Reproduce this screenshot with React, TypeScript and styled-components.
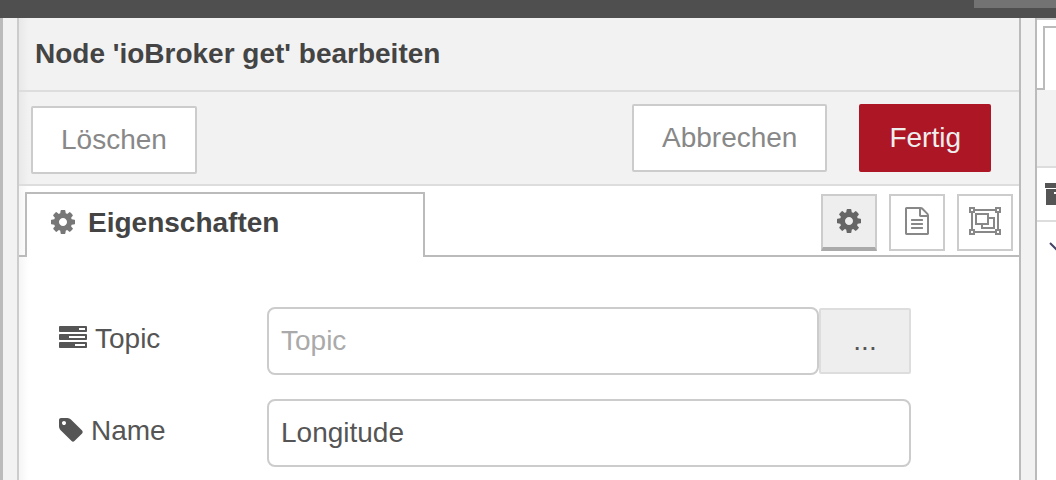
import React from "react";
import styled, { createGlobalStyle } from "styled-components";

const GlobalStyle = createGlobalStyle`
  *, *::before, *::after { box-sizing: border-box; }
  body {
    margin: 0;
    background: #fff;
    color: #555;
    font-family: "Liberation Sans", Arial, Helvetica, sans-serif;
    font-size: 28px;
    overflow: hidden;
  }
  button, input { font: inherit; margin: 0; }
`;

const Page = styled.div`
  display: flex;
  flex-direction: column;
  min-height: 100vh;
`;

const TopBar = styled.header`
  display: flex;
  justify-content: flex-end;
  height: 18px;
  background: #4f4f4f;
`;

const DeployButton = styled.div`
  width: 82px;
  height: 8px;
  background: #737373;
`;

const Workspace = styled.div`
  display: flex;
  flex: 1;
`;

const CanvasEdge = styled.div`
  flex: none;
  width: 3px;
  background: #bbb;
`;

const Gutter = styled.div<{ $width: number }>`
  flex: none;
  width: ${(p) => p.$width}px;
  background: #f2f2f2;
`;

const Tray = styled.main`
  flex: 1;
  min-width: 0;
  border-left: 2px solid #ccc;
  border-right: 2px solid #bbb;
  background: linear-gradient(to right, rgba(0, 0, 0, 0.04), rgba(0, 0, 0, 0) 10px);
`;

const TrayTitle = styled.h1`
  margin: 0;
  padding: 0 16px;
  border-bottom: 2px solid #ddd;
  background: rgba(0, 0, 0, 0.05);
  color: #444;
  font-size: 28px;
  font-weight: bold;
  line-height: 72px;
`;

const ActionBar = styled.div`
  display: flex;
  align-items: flex-start;
  gap: 32px;
  padding: 12px 28px 10px 12px;
  border-bottom: 2px solid #ddd;
  background: rgba(0, 0, 0, 0.05);
`;

const StartActions = styled.div`
  flex: 1;
  padding-top: 2px;
`;

const ActionButton = styled.button<{ $primary?: boolean }>`
  display: block;
  height: 68px;
  padding: 0 28px;
  border: 2px solid ${(p) => (p.$primary ? "#ad1625" : "#ccc")};
  border-radius: 2px;
  background: ${(p) => (p.$primary ? "#ad1625" : "#fff")};
  color: ${(p) => (p.$primary ? "#eee" : "#888")};
`;

const TabBar = styled.div`
  display: flex;
  align-items: flex-start;
  justify-content: space-between;
  height: 71px;
  padding: 6px 6px 0;
  border-bottom: 2px solid #bbb;
`;

const Tab = styled.button`
  display: flex;
  align-items: center;
  gap: 13px;
  width: 400px;
  height: 65px;
  padding: 0 24px 6px;
  border: 2px solid #bbb;
  border-bottom: 0;
  border-radius: 1px;
  background: #fff;
  color: #444;
  font-weight: bold;
  svg { color: #777; }
`;

const TabTools = styled.div`
  display: flex;
  gap: 12px;
  padding-top: 2px;
`;

const ToolButton = styled.button<{ $active?: boolean }>`
  display: flex;
  align-items: center;
  justify-content: center;
  width: 56px;
  height: 57px;
  padding: 0 0 ${(p) => (p.$active ? 0 : 2)}px;
  border: 2px solid #ccc;
  border-bottom: ${(p) => (p.$active ? "4px solid #aaa" : "2px solid #ccc")};
  background: ${(p) => (p.$active ? "#eee" : "#fff")};
  color: ${(p) => (p.$active ? "#666" : "#888")};
`;

const Form = styled.form`
  display: flex;
  flex-direction: column;
  gap: 24px;
  padding: 50px 40px 0;
`;

const FormRow = styled.div`
  display: flex;
  align-items: flex-start;
`;

const Label = styled.label`
  display: flex;
  align-items: center;
  gap: 8px;
  width: 208px;
  height: 64px;
`;

const Field = styled.div`
  display: flex;
  align-items: center;
  width: 70%;
`;

const TextInput = styled.input`
  flex: 1;
  min-width: 0;
  height: 68px;
  padding: 0 12px;
  border: 2px solid #ccc;
  border-radius: 8px;
  background: #fff;
  color: #555;
  outline: none;
  &::placeholder { color: #aaa; opacity: 1; }
`;

const BrowseButton = styled.button`
  flex: none;
  width: 92px;
  height: 66px;
  padding: 0;
  border: 2px solid #ddd;
  border-radius: 2px;
  background: #eee;
  color: #555;
`;

const Sidebar = styled.aside`
  flex: none;
  width: 21px;
  border-left: 2px solid #bbb;
  overflow: hidden;
`;

const SidebarTabs = styled.div`
  height: 72px;
  padding: 6px 0 0 6px;
  border-top: 2px solid #ccc;
  border-bottom: 2px solid #bbb;
`;

const SidebarTab = styled.div`
  height: 64px;
  margin-right: -2px;
  margin-bottom: -2px;
  border: 2px solid #bbb;
  border-bottom: 0;
  background: #fff;
`;

const SidebarToolbar = styled.div`
  height: 78px;
  border-bottom: 2px solid #ddd;
  background: #f2f2f2;
`;

const SidebarRow = styled.div<{ $ruled?: boolean }>`
  height: 54px;
  padding: ${(p) => (p.$ruled ? "16px 0 0 8px" : "22px 0 0 12px")};
  border-bottom: ${(p) => (p.$ruled ? "2px solid #ddd" : "0")};
`;

/* The icon glyphs sit slightly above the middle of the text line. */
const Icon = styled.svg`
  display: block;
  flex: none;
  margin-top: -2px;
  fill: currentColor;
`;

const CogIcon = () => (
  <Icon width="24" height="28" viewBox="128 0 1536 1792" aria-hidden="true">
    <path d="M1152 896q0-106-75-181t-181-75-181 75-75 181 75 181 181 75 181-75 75-181zm512-109v222q0 12-8 23t-20 13l-185 28q-19 54-39 91 35 50 107 138 10 12 10 25t-9 23q-27 37-99 108t-94 71q-12 0-26-9l-138-108q-44 23-91 38-16 136-29 186-7 28-36 28h-222q-14 0-24.500-8.500t-11.500-21.500l-28-184q-49-16-90-37l-141 107q-10 9-25 9-14 0-25-11-126-114-165-168-7-10-7-23 0-12 8-23 15-21 51-66.500t54-70.500q-27-50-41-99l-183-27q-13-2-21-12.500t-8-23.500v-222q0-12 8-23t19-13l186-28q14-46 39-92-40-57-107-138-10-12-10-24 0-10 9-23 26-36 98.500-107.500t94.500-71.500q13 0 26 10l138 107q44-23 91-38 16-136 29-186 7-28 36-28h222q14 0 24.500 8.500t11.500 21.500l28 184q49 16 90 37l142-107q9-9 24-9 13 0 25 10 129 119 165 170 7 8 7 22 0 12-8 23-15 21-51 66.500t-54 70.500q26 50 41 98l183 28q13 2 21 12.500t8 23.500z" />
  </Icon>
);

const DocumentIcon = () => (
  <Icon width="24" height="28" viewBox="128 0 1536 1792" aria-hidden="true">
    <path d="M1596 380q28 28 48 76t20 88v1152q0 40-28 68t-68 28h-1344q-40 0-68-28t-28-68v-1600q0-40 28-68t68-28h896q40 0 88 20t76 48zm-444-244v376h376q-10-29-22-41l-313-313q-12-12-41-22zm384 1528v-1024h-416q-40 0-68-28t-28-68v-416h-768v1536h1280zm-1024-864q0-14 9-23t23-9h704q14 0 23 9t9 23v64q0 14-9 23t-23 9h-704q-14 0-23-9t-9-23v-64zm736 224q14 0 23 9t9 23v64q0 14-9 23t-23 9h-704q-14 0-23-9t-9-23v-64q0-14 9-23t23-9h704zm0 256q14 0 23 9t9 23v64q0 14-9 23t-23 9h-704q-14 0-23-9t-9-23v-64q0-14 9-23t23-9h704z" />
  </Icon>
);

const ObjectGroupIcon = () => (
  <Icon width="32" height="28" viewBox="0 0 2048 1792" aria-hidden="true">
    <path
      fillRule="evenodd"
      d="M2048 384h-128v1024h128v384h-384v-128h-1280v128h-384v-384h128v-1024h-128v-384h384v128h1280v-128h384zM1792 128v128h128v-128zM128 128v128h128v-128zM256 1664v-128h-128v128zM1664 1536v-128h128v-1024h-128v-128h-1280v128h-128v1024h128v128zM1920 1664v-128h-128v128zM1280 640h384v768h-896v-256h-384v-768h896zM512 512h640v512h-640zM1536 768h-256v384h-384v128h640z"
    />
  </Icon>
);

const TasksIcon = () => (
  <Icon width="28" height="28" viewBox="0 0 1792 1792" aria-hidden="true">
    <path d="M1024 1408h640v-128h-640v128zm-384-512h1024v-128h-1024v128zm640-512h384v-128h-384v128zm512 832v256q0 26-19 45t-45 19h-1664q-26 0-45-19t-19-45v-256q0-26 19-45t45-19h1664q26 0 45 19t19 45zm0-512v256q0 26-19 45t-45 19h-1664q-26 0-45-19t-19-45v-256q0-26 19-45t45-19h1664q26 0 45 19t19 45zm0-512v256q0 26-19 45t-45 19h-1664q-26 0-45-19t-19-45v-256q0-26 19-45t45-19h1664q26 0 45 19t19 45z" />
  </Icon>
);

const TagIcon = () => (
  <Icon width="24" height="28" viewBox="128 0 1536 1792" aria-hidden="true">
    <path d="M576 448q0-53-37.500-90.500t-90.500-37.500-90.500 37.500-37.500 90.500 37.500 90.500 90.500 37.500 90.500-37.500 37.500-90.500zm1067 576q0 53-37 90l-491 492q-39 37-91 37-53 0-90-37l-715-716q-38-37-64.500-101t-26.500-117v-416q0-52 38-90t90-38h416q53 0 117 26.500t102 64.500l715 714q37 39 37 91z" />
  </Icon>
);

const ArchiveIcon = () => (
  <Icon width="26" height="24" viewBox="0 0 26 24" aria-hidden="true">
    <path fillRule="evenodd" d="M0 1h26v5H0zM1 7h24v16H1zM9 10v2h8v-2z" />
  </Icon>
);

const ChevronIcon = () => (
  <Icon width="16" height="12" viewBox="0 0 16 12" aria-hidden="true">
    <path d="M1 1l7 7 7-7" fill="none" stroke="#446" strokeWidth="2" />
  </Icon>
);

export default function App() {
  return (
    <Page>
      <GlobalStyle />
      <TopBar>
        <DeployButton />
      </TopBar>
      <Workspace>
        <CanvasEdge />
        <Gutter $width={14} />
        <Tray>
          <TrayTitle>Node 'ioBroker get' bearbeiten</TrayTitle>
          <ActionBar>
            <StartActions>
              <ActionButton type="button">Löschen</ActionButton>
            </StartActions>
            <ActionButton type="button">Abbrechen</ActionButton>
            <ActionButton type="button" $primary>
              Fertig
            </ActionButton>
          </ActionBar>
          <TabBar>
            <Tab type="button">
              <CogIcon />
              Eigenschaften
            </Tab>
            <TabTools>
              <ToolButton type="button" aria-label="Eigenschaften" $active>
                <CogIcon />
              </ToolButton>
              <ToolButton type="button" aria-label="Beschreibung">
                <DocumentIcon />
              </ToolButton>
              <ToolButton type="button" aria-label="Darstellung">
                <ObjectGroupIcon />
              </ToolButton>
            </TabTools>
          </TabBar>
          <Form>
            <FormRow>
              <Label htmlFor="topic">
                <TasksIcon />
                Topic
              </Label>
              <Field>
                <TextInput id="topic" type="text" placeholder="Topic" />
                <BrowseButton type="button">...</BrowseButton>
              </Field>
            </FormRow>
            <FormRow>
              <Label htmlFor="name">
                <TagIcon />
                Name
              </Label>
              <Field>
                <TextInput id="name" type="text" defaultValue="Longitude" />
              </Field>
            </FormRow>
          </Form>
        </Tray>
        <Gutter $width={14} />
        <Sidebar>
          <SidebarTabs>
            <SidebarTab />
          </SidebarTabs>
          <SidebarToolbar />
          <SidebarRow $ruled>
            <ArchiveIcon />
          </SidebarRow>
          <SidebarRow>
            <ChevronIcon />
          </SidebarRow>
        </Sidebar>
      </Workspace>
    </Page>
  );
}
